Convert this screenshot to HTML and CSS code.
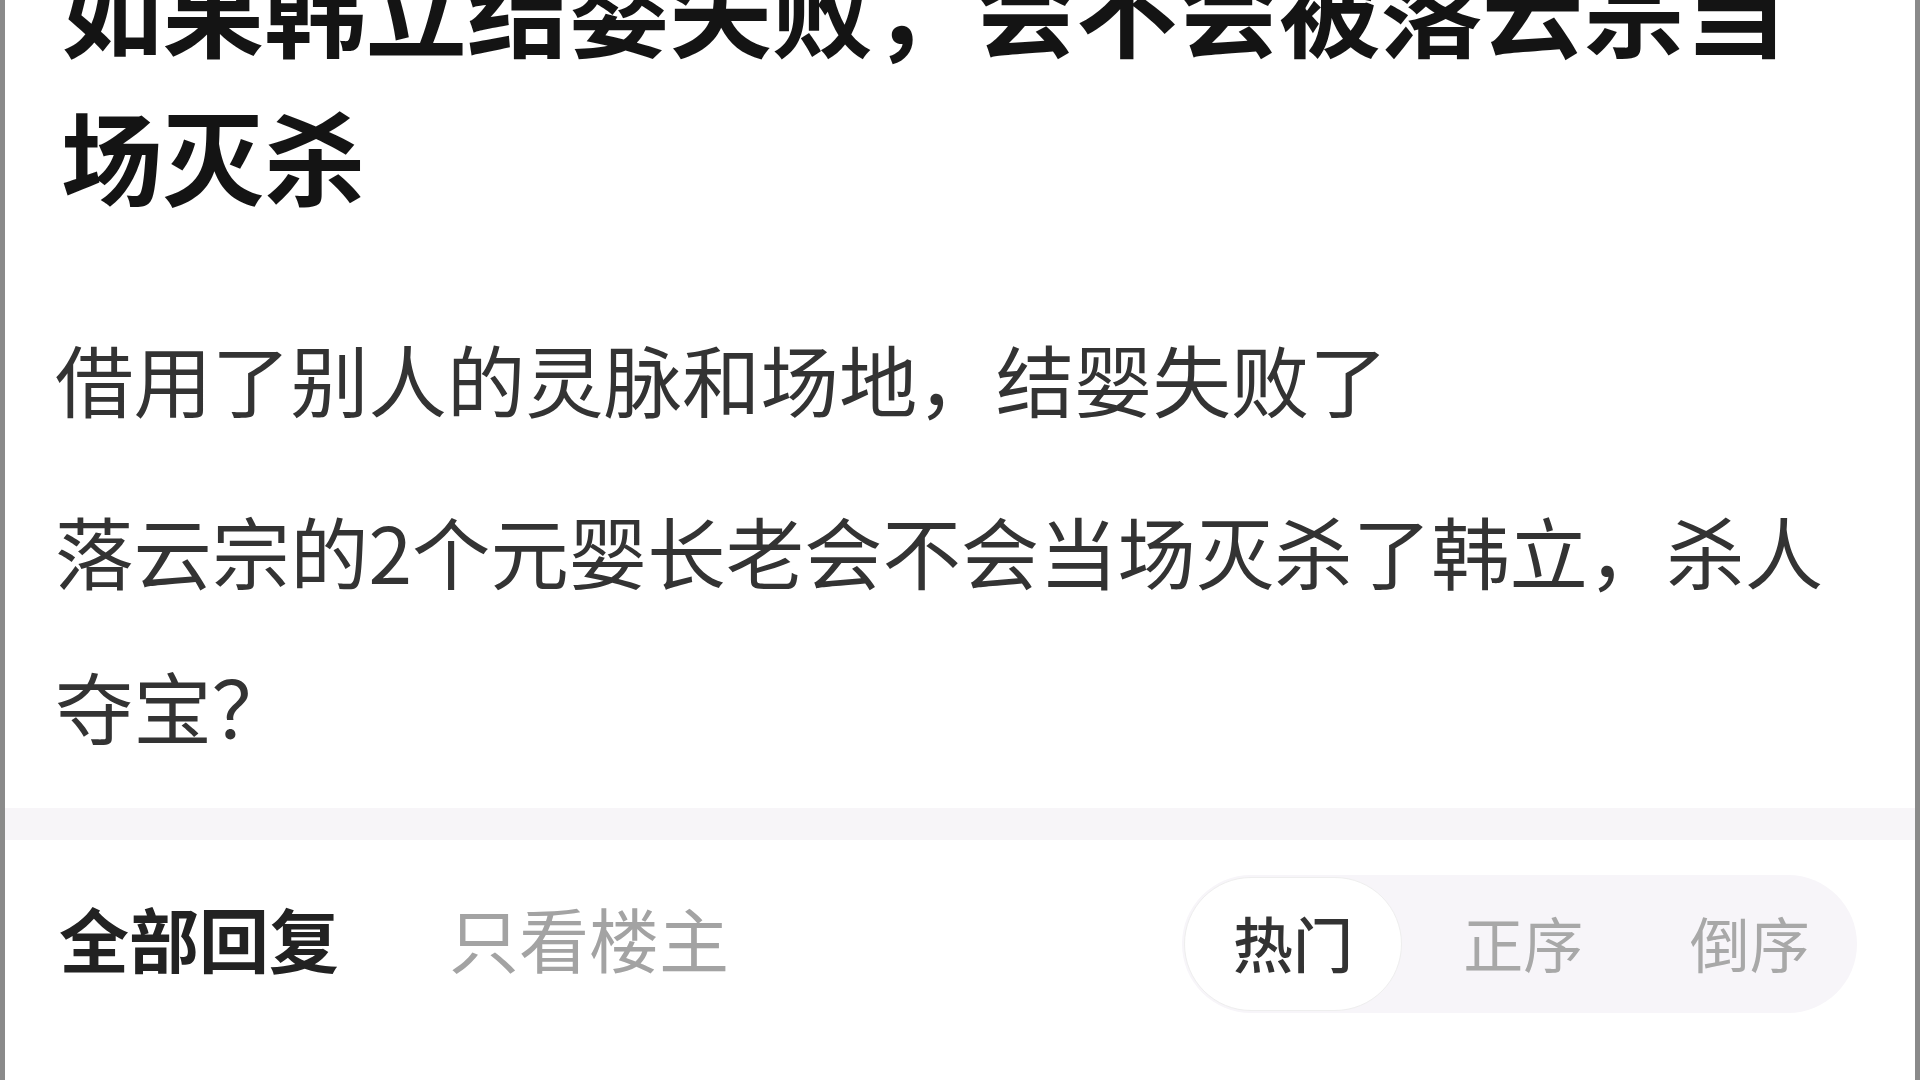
FILE: index.html
```html
<!DOCTYPE html>
<html lang="zh-CN">
<head>
<meta charset="utf-8">
<title>帖子详情</title>
<link rel="stylesheet" href="styles.css">
</head>
<body>
<div class="page">
  <article class="post">
    <h1 class="post-title">如果韩立结婴失败，会不会被落云宗当场灭杀</h1>
    <p class="post-text">借用了别人的灵脉和场地，结婴失败了</p>
    <p class="post-text">落云宗的2个元婴长老会不会当场灭杀了韩立，杀人夺宝？</p>
  </article>
  <div class="band"></div>
  <div class="reply-bar">
    <div class="reply-tabs">
      <span class="reply-tab active">全部回复</span>
      <span class="reply-tab">只看楼主</span>
    </div>
    <div class="sort">
      <span class="sort-item active">热门</span>
      <span class="sort-item">正序</span>
      <span class="sort-item">倒序</span>
    </div>
  </div>
</div>
</body>
</html>
```
FILE: styles.css
```css
html, body {
  margin: 0;
  padding: 0;
  background: #ffffff;
}

body {
  font-family: "Noto Sans CJK SC", "Noto Sans", sans-serif;
}

.page {
  box-sizing: border-box;
  width: 1920px;
  height: 1080px;
  overflow: hidden;
  display: flex;
  flex-direction: column;
  border-left: 5px solid #8a8a8a;
  border-right: 5px solid #8a8a8a;
  background: #ffffff;
}

.post {
  display: flex;
  flex-direction: column;
  padding: 0 80px 0 50px;
}

.post-title {
  margin: -68px 0 73px 6px;
  font-size: 101.5px;
  line-height: 148px;
  font-weight: 700;
  color: #141414;
}

.post-text {
  margin: 0 0 17px 0;
  font-size: 78.4px;
  line-height: 155px;
  font-weight: 400;
  color: #333333;
}

.post-text:last-child {
  margin-bottom: 0;
}

.band {
  margin-top: 25px;
  height: 32px;
  background: #f7f5f8;
}

.reply-bar {
  display: flex;
  align-items: center;
  justify-content: space-between;
  padding: 35px 58px 0 54px;
}

.reply-tabs {
  display: flex;
  align-items: center;
  gap: 110px;
  margin-bottom: 13px;
}

.reply-tab {
  font-size: 70px;
  line-height: 1;
  color: #a3a3a3;
}

.reply-tab.active {
  font-weight: 700;
  color: #222222;
}

.sort {
  display: flex;
  box-sizing: border-box;
  width: 675px;
  height: 138px;
  padding: 2px;
  border-radius: 69px;
  background: #f7f5f9;
}

.sort-item {
  flex: 1;
  display: flex;
  align-items: center;
  justify-content: center;
  padding: 0 0 6px 16px;
  box-sizing: border-box;
  font-size: 60px;
  color: #a8a8a8;
  border-radius: 67px;
}

.sort-item.active {
  flex: 0 0 218px;
  padding-left: 0;
  background: #ffffff;
  border: 1.5px solid #eeeeee;
  color: #333333;
  font-weight: 500;
}
```
